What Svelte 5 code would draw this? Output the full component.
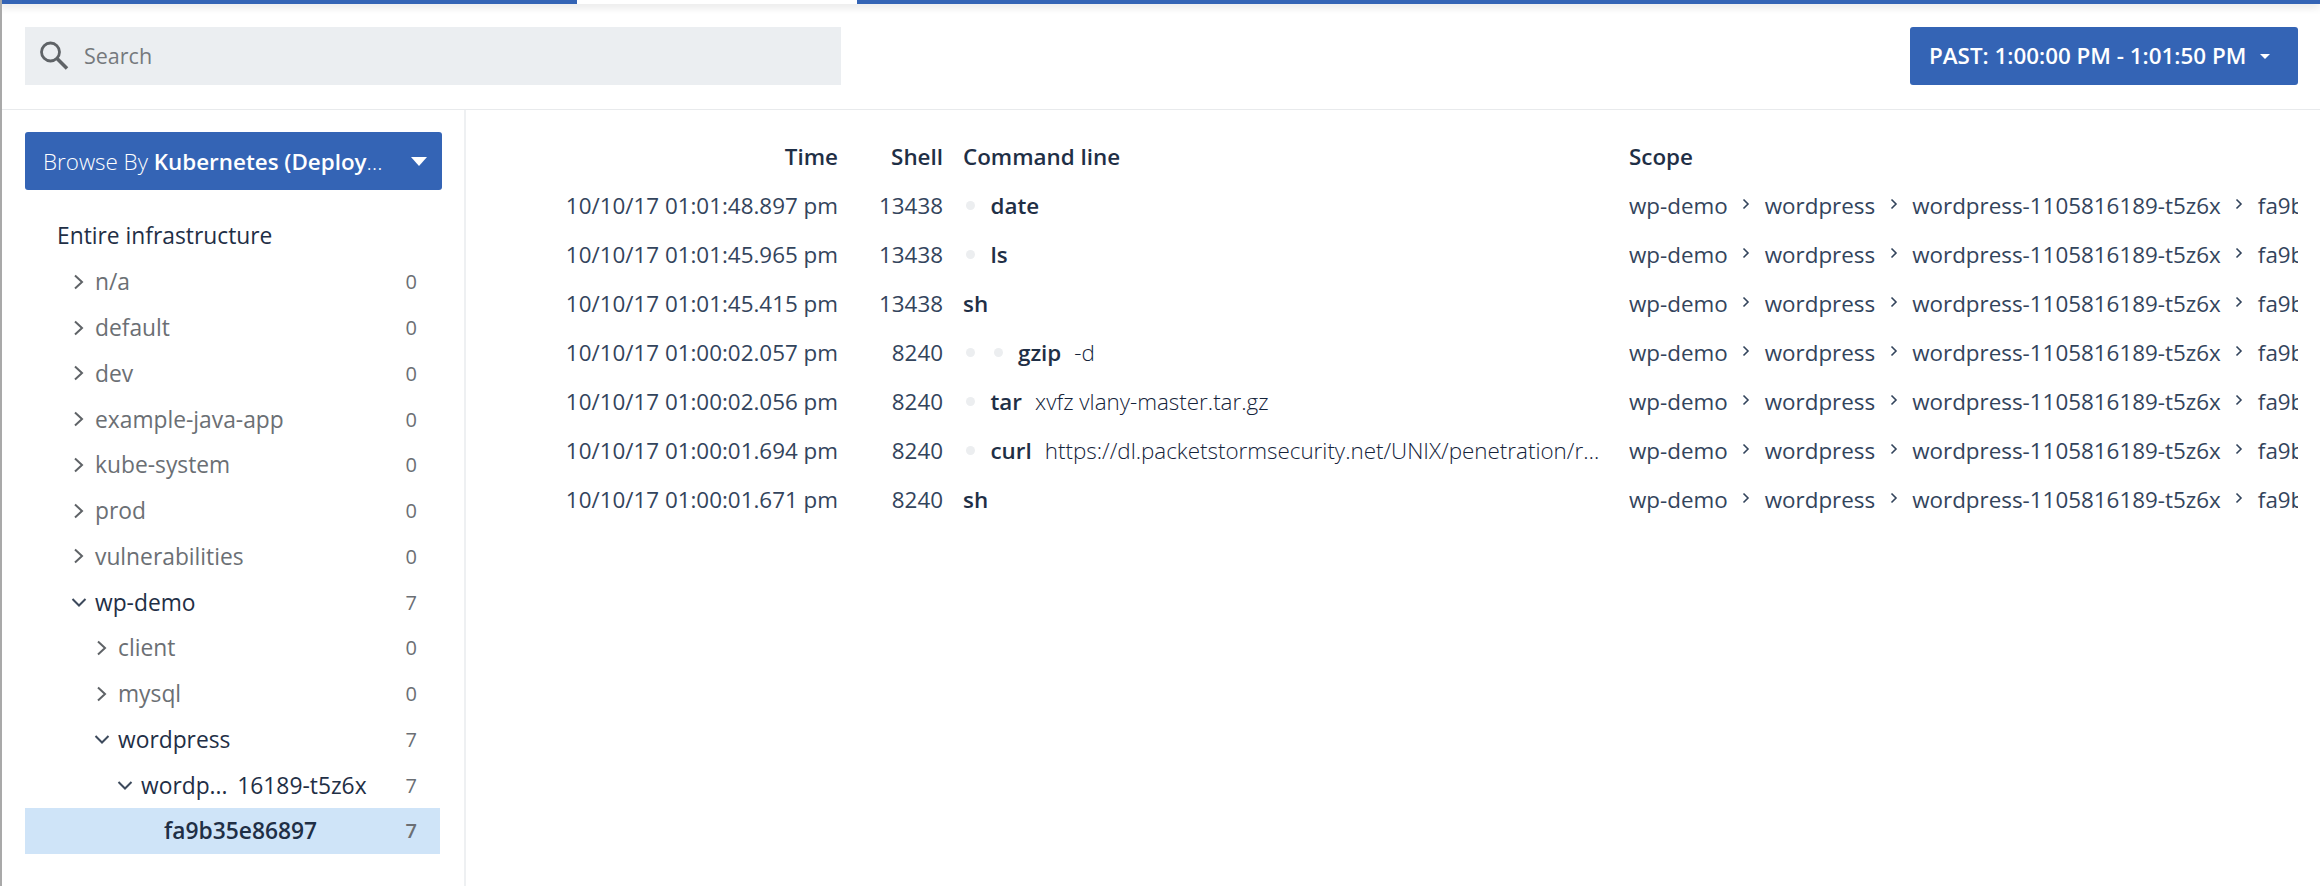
<script lang="ts">
	const tree = [
		{ label: 'n/a', count: 0, depth: 0 },
		{ label: 'default', count: 0, depth: 0 },
		{ label: 'dev', count: 0, depth: 0 },
		{ label: 'example-java-app', count: 0, depth: 0 },
		{ label: 'kube-system', count: 0, depth: 0 },
		{ label: 'prod', count: 0, depth: 0 },
		{ label: 'vulnerabilities', count: 0, depth: 0 },
		{ label: 'wp-demo', count: 7, depth: 0, open: true },
		{ label: 'client', count: 0, depth: 1 },
		{ label: 'mysql', count: 0, depth: 1 },
		{ label: 'wordpress', count: 7, depth: 1, open: true },
		{ label: 'wordp... \u200916189-t5z6x', count: 7, depth: 2, open: true },
		{ label: 'fa9b35e86897', count: 7, depth: 3, leaf: true, selected: true }
	];

	const rows = [
		{ time: '10/10/17 01:01:48.897 pm', shell: 13438, level: 1, cmd: 'date', args: '' },
		{ time: '10/10/17 01:01:45.965 pm', shell: 13438, level: 1, cmd: 'ls', args: '' },
		{ time: '10/10/17 01:01:45.415 pm', shell: 13438, level: 0, cmd: 'sh', args: '' },
		{ time: '10/10/17 01:00:02.057 pm', shell: 8240, level: 2, cmd: 'gzip', args: '-d' },
		{ time: '10/10/17 01:00:02.056 pm', shell: 8240, level: 1, cmd: 'tar', args: 'xvfz vlany-master.tar.gz' },
		{
			time: '10/10/17 01:00:01.694 pm',
			shell: 8240,
			level: 1,
			cmd: 'curl',
			args: 'https://dl.packetstormsecurity.net/UNIX/penetration/rootkits/vlany-master.tar.gz'
		},
		{ time: '10/10/17 01:00:01.671 pm', shell: 8240, level: 0, cmd: 'sh', args: '' }
	];

	const scope = ['wp-demo', 'wordpress', 'wordpress-1105816189-t5z6x', 'fa9b35e86897'];
</script>

<div class="page">
	<div class="progress">
		<div class="seg-a"></div>
		<div class="seg-b"></div>
		<div class="seg-c"></div>
	</div>

	<header class="top">
		<div class="search">
			<svg width="30" height="30" viewBox="0 0 30 30" fill="none" stroke="#5f6367">
				<circle cx="11.500" cy="12" r="9" stroke-width="2.800" />
				<path d="M18 18.500l10 10" stroke-width="3.600" />
			</svg>
			<span>Search</span>
		</div>
		<button class="time-btn">
			PAST: 1:00:00 PM - 1:01:50 PM
			<i class="caret-sm"></i>
		</button>
	</header>

	<div class="body">
		<aside class="side">
			<button class="browse">
				<span class="browse-text">Browse By <b>Kubernetes (Deployments)</b></span>
				<i class="caret"></i>
			</button>
			<div class="root">Entire infrastructure</div>
			{#each tree as node}
				<div class="node" class:selected={node.selected} class:active={node.count > 0}>
					<div class="node-label" style="padding-left: {70 + node.depth * 23}px">
						{#if !node.leaf}
							<svg class="chev" width="16" height="16" viewBox="0 0 16 16" fill="none" stroke={node.open ? '#3d4a5c' : '#5f6367'} stroke-width="2">
								{#if node.open}
									<path d="M1.500 5l6.500 6.500L14.500 5" />
								{:else}
									<path d="M4 1.500l7 6.500-7 6.500" />
								{/if}
							</svg>
						{/if}
						<span class="name">{node.label}</span>
					</div>
					<span class="count">{node.count}</span>
				</div>
			{/each}
		</aside>

		<main class="main">
			<div class="row head">
				<div class="time">Time</div>
				<div class="shell">Shell</div>
				<div class="cmdline">Command line</div>
				<div class="scope">Scope</div>
			</div>
			{#each rows as row}
				<div class="row">
					<div class="time">{row.time}</div>
					<div class="shell">{row.shell}</div>
					<div class="cmdline">
						{#each Array(row.level) as _}
							<span class="indent"><i class="dot"></i></span>
						{/each}
						<b>{row.cmd}</b>
						{#if row.args}<span class="args">{row.args}</span>{/if}
					</div>
					<div class="scope">
						{#each scope as part, i}
							{#if i > 0}
								<svg class="sep" width="8" height="12" viewBox="0 0 8 12" fill="none" stroke="#33445c" stroke-width="1.600">
									<path d="M1.500 1.500L6 6l-4.500 4.500" />
								</svg>
							{/if}
							<span>{part}</span>
						{/each}
					</div>
				</div>
			{/each}
		</main>
	</div>
</div>

<style>
	:global(body) {
		margin: 0;
		background: #fff;
		font-family: 'Open Sans', 'Noto Sans', sans-serif;
		font-size: 22.4px;
		color: #33445c;
	}

	.page {
		height: 886px;
		display: flex;
		flex-direction: column;
		border-left: 2px solid #a9a9a9;
		box-sizing: border-box;
		overflow: hidden;
	}

	.progress {
		display: flex;
		height: 4px;
		margin-left: -2px;
		box-shadow: 0 2px 8px rgba(0, 0, 0, 0.18);
		flex-shrink: 0;
	}

	.seg-a {
		width: 577px;
		background: #3464b5;
	}

	.seg-b {
		width: 280px;
		background: #fff;
	}

	.seg-c {
		flex: 1;
		background: #3464b5;
	}

	.top {
		height: 106px;
		box-sizing: border-box;
		padding: 23px 22px 0 23px;
		display: flex;
		justify-content: space-between;
		align-items: flex-start;
		border-bottom: 1px solid #e8eaec;
		flex-shrink: 0;
	}

	.search {
		width: 816px;
		height: 58px;
		background: #ebeef1;
		display: flex;
		align-items: center;
		gap: 15px;
		padding: 0 0 2px 14px;
		box-sizing: border-box;
		color: #75797d;
		font-size: 21.500px;
	}

	.time-btn {
		width: 388px;
		height: 58px;
		background: #3464b5;
		border: none;
		border-radius: 3px;
		color: #fff;
		font: 600 22.4px 'Open Sans', sans-serif;
		display: flex;
		align-items: center;
		padding: 0 0 2px 19px;
		white-space: nowrap;
	}

	.caret-sm {
		width: 0;
		height: 0;
		margin: 3px 0 0 14px;
		border-left: 5px solid transparent;
		border-right: 5px solid transparent;
		border-top: 5px solid #fff;
	}

	.body {
		flex: 1;
		display: flex;
		min-height: 0;
	}

	.side {
		width: 464px;
		box-sizing: border-box;
		border-right: 2px solid #eef0f2;
		padding: 22px 22px 0 23px;
		flex-shrink: 0;
		font-size: 22.800px;
	}

	.browse {
		width: 417px;
		height: 58px;
		background: #3464b5;
		border: none;
		border-radius: 3px;
		color: #fff;
		font: 300 22.4px 'Open Sans', sans-serif;
		display: flex;
		align-items: center;
		justify-content: space-between;
		padding: 0 15px 0 18px;
	}

	.browse-text {
		width: 346px;
		overflow: hidden;
		text-overflow: ellipsis;
		white-space: nowrap;
		text-align: left;
	}

	.browse b {
		font-weight: 600;
	}

	.caret {
		width: 0;
		height: 0;
		border-left: 8px solid transparent;
		border-right: 8px solid transparent;
		border-top: 9px solid #fff;
	}

	.root {
		height: 46px;
		line-height: 46px;
		margin-top: 23px;
		padding-left: 32px;
		color: #1f2f46;
	}

	.node {
		height: 45.750px;
		width: 415px;
		display: flex;
		align-items: center;
		justify-content: space-between;
		padding-right: 23px;
		box-sizing: border-box;
		color: #6b6f74;
	}

	.node.active {
		color: #1f2f46;
	}

	.node-label {
		display: flex;
		align-items: center;
		position: relative;
		white-space: pre;
	}

	.chev {
		position: absolute;
		margin-left: -24px;
	}

	.count {
		font-size: 20px;
		color: #6b6f74;
	}

	.selected {
		background: #cfe4f8;
	}

	.selected .name {
		font-weight: 600;
	}

	.selected .count {
		font-weight: 600;
	}

	.main {
		flex: 1;
		min-width: 0;
		padding: 22px 22px 0 0;
		overflow: hidden;
	}

	.row {
		height: 49px;
		display: grid;
		grid-template-columns: 372px 105px 686px 1fr;
		align-items: center;
		white-space: nowrap;
	}

	.head {
		font-weight: 600;
		color: #1f2f46;
	}

	.time,
	.shell {
		text-align: right;
	}

	.cmdline {
		padding: 0 20px;
		display: flex;
		align-items: center;
		min-width: 0;
	}

	.cmdline b {
		font-weight: 600;
		color: #1f2f46;
	}

	.args {
		margin-left: 13px;
		min-width: 0;
		overflow: hidden;
		text-overflow: ellipsis;
		font-weight: 300;
		color: #14233a;
	}

	.indent {
		width: 27.500px;
		flex-shrink: 0;
		display: flex;
	}

	.dot {
		width: 9px;
		height: 9px;
		border-radius: 50%;
		background: #eceef0;
		margin-left: 3px;
	}

	.scope {
		overflow: hidden;
		display: flex;
		align-items: center;
	}

	.scope span {
		flex-shrink: 0;
	}

	.sep {
		flex-shrink: 0;
		margin: 0 14.500px;
		position: relative;
		top: -2px;
	}
</style>
